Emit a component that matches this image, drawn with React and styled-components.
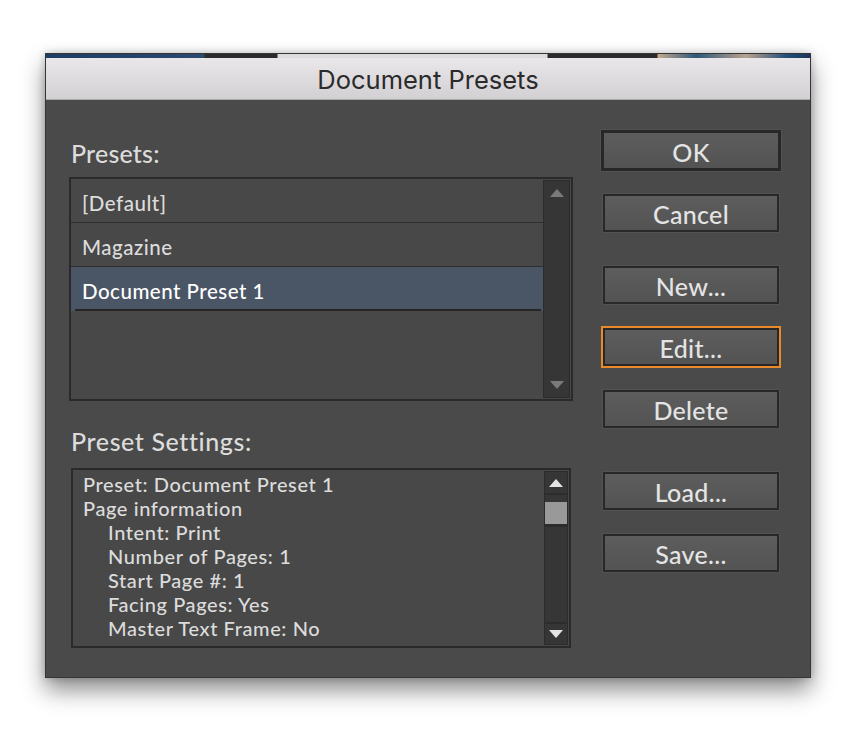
import React from "react";
import styled, { createGlobalStyle, css } from "styled-components";

const ui = `"Lato", "Open Sans", sans-serif`;
const sys = `"Inter", "Liberation Sans", sans-serif`;

const panel = "#4a4a4a";
const well = "#484848";
const edge = "#2a2a2a";
const ink = "#dcdcdc";

const GlobalStyle = createGlobalStyle`
  html, body {
    margin: 0;
    padding: 0;
    background: #ffffff;
  }
  body {
    font-family: ${ui};
    font-weight: 500;
    -webkit-font-smoothing: antialiased;
  }
`;

const Page = styled.div`
  width: 857px;
  height: 731px;
  box-sizing: border-box;
  padding: 53px 0 0 45px;
`;

const Window = styled.section`
  width: 766px;
  box-sizing: border-box;
  border: 1px solid #353535;
  background: ${panel};
  box-shadow: 0 12px 22px rgba(0, 0, 0, 0.45), 0 0 8px rgba(0, 0, 0, 0.2);
  display: flex;
  flex-direction: column;
`;

/* bits of the desktop that show above the title bar */
const Backdrop = styled.div`
  height: 4px;
  background: linear-gradient(
    90deg,
    #1e3d63 0,
    #2a4a70 158px,
    #2b2b2b 159px,
    #2b2b2b 231px,
    #dcdcdc 232px,
    #dcdcdc 501px,
    #2b2b2b 502px,
    #2b2b2b 611px,
    #c4a88e 612px,
    #2c5878 650px,
    #b9a290 700px,
    #24507a 740px,
    #1b3558 764px
  );
`;

const TitleBar = styled.header`
  height: 42px;
  box-sizing: border-box;
  border-bottom: 1px solid #a9a9a9;
  background: linear-gradient(#e9e7e9, #d2d0d2);
  display: flex;
  align-items: center;
  justify-content: center;
  padding-top: 2px;
  font-family: ${sys};
  font-weight: 400;
  font-size: 25.5px;
  color: #2b2b2b;
`;

const Body = styled.div`
  height: 577px;
  box-sizing: border-box;
  padding: 0 28px 0 23px;
  display: flex;
  gap: 28px;
`;

const LeftColumn = styled.div`
  width: 504px;
  padding-top: 38px;
  display: flex;
  flex-direction: column;
`;

const Label = styled.div`
  font-size: 25px;
  line-height: 30px;
  letter-spacing: ${(p) => p.$spacing || 0}px;
  color: ${ink};
  padding-left: 2px;
  margin-top: ${(p) => p.$top || 0}px;
`;

const Well = styled.div`
  display: flex;
  box-sizing: border-box;
  border: 2px solid ${edge};
  background: ${well};
  width: ${(p) => p.$width}px;
  height: ${(p) => p.$height}px;
  margin-top: ${(p) => p.$top}px;
  margin-left: ${(p) => p.$left || 0}px;
`;

const Rows = styled.ul`
  flex: 1;
  list-style: none;
  margin: 0;
  padding: 0;
`;

const Row = styled.li`
  height: 44px;
  box-sizing: border-box;
  padding: 12px 0 0 11px;
  font-size: 20.5px;
  line-height: 24px;
  letter-spacing: 0.5px;
  color: ${ink};
  border-bottom: 1px solid #2e2e2e;

  ${(p) =>
    p.$selected &&
    css`
      background: #4a5566;
      color: #ffffff;
      border-bottom: none;
      position: relative;
      &::after {
        content: "";
        position: absolute;
        left: 4px;
        right: 2px;
        bottom: 0;
        height: 2px;
        background: #262626;
      }
    `}
`;

const Details = styled.div`
  flex: 1;
  padding: 2px 0 0 10px;
  font-size: 20px;
  line-height: 24px;
  letter-spacing: 0.6px;
  color: ${ink};
`;

const Line = styled.div`
  padding-left: ${(p) => (p.$indent ? 25 : 0)}px;
  white-space: nowrap;
`;

const Scrollbar = styled.div`
  width: ${(p) => p.$width}px;
  box-sizing: border-box;
  margin: 1px 1px 1px 0;
  border: 1px solid #2c2c2c;
  background: #363636;
  display: flex;
  flex-direction: column;
  align-items: stretch;
`;

const Arrow = styled.div`
  height: ${(p) => p.$height}px;
  display: flex;
  align-items: center;
  justify-content: center;
  color: ${(p) => (p.$active ? "#e4e4e4" : "#7a7a7a")};
  ${(p) =>
    p.$boxed &&
    css`
      border-bottom: ${p.$down ? "none" : "2px solid #2c2c2c"};
      border-top: ${p.$down ? "2px solid #2c2c2c" : "none"};
    `}
`;

const Thumb = styled.div`
  height: 22px;
  margin-top: 7px;
  background: #999999;
  border-bottom: 3px solid #2c2c2c;
`;

const Track = styled.div`
  flex: 1;
`;

const ButtonColumn = styled.div`
  width: 180px;
  padding-top: 30px;
  display: flex;
  flex-direction: column;
  align-items: center;
`;

const Button = styled.button`
  width: ${(p) => (p.$default ? 180 : 176)}px;
  height: ${(p) => (p.$default ? 41 : 38)}px;
  margin-top: ${(p) => p.$top || 0}px;
  box-sizing: border-box;
  border: ${(p) => (p.$default ? 3 : 2)}px solid #282828;
  background: linear-gradient(#5d5d5d, #535353);
  box-shadow: 0 0 0 1px #525252;
  color: #e4e4e4;
  font-family: ${ui};
  font-weight: 500;
  font-size: 25px;
  letter-spacing: 0.3px;
  line-height: 1;
  padding: 3px 0 0;
  cursor: default;

  ${(p) =>
    p.$focused &&
    css`
      box-shadow: 0 0 0 2px #e8892b;
    `}
`;

const Triangle = ({ down }) => (
  <svg width="16" height="10" viewBox="0 0 16 10">
    <path d={down ? "M1 1 H15 L8 9 Z" : "M1 9 H15 L8 1 Z"} fill="currentColor" />
  </svg>
);

const settings = [
  ["Preset: Document Preset 1", false],
  ["Page information", false],
  ["Intent: Print", true],
  ["Number of Pages: 1", true],
  ["Start Page #: 1", true],
  ["Facing Pages: Yes", true],
  ["Master Text Frame: No", true],
];

const App = () => (
  <Page>
    <GlobalStyle />
    <Window>
      <Backdrop />
      <TitleBar>Document Presets</TitleBar>
      <Body>
        <LeftColumn>
          <Label $spacing={0.2}>Presets:</Label>
          <Well $width={504} $height={224} $top={9}>
            <Rows>
              <Row>[Default]</Row>
              <Row>Magazine</Row>
              <Row $selected>Document Preset 1</Row>
            </Rows>
            <Scrollbar $width={27}>
              <Arrow $height={24}>
                <Triangle />
              </Arrow>
              <Track />
              <Arrow $height={24}>
                <Triangle down />
              </Arrow>
            </Scrollbar>
          </Well>
          <Label $top={25} $spacing={0.6}>
            Preset Settings:
          </Label>
          <Well $width={500} $height={180} $top={12} $left={2}>
            <Details>
              {settings.map(([text, indent]) => (
                <Line key={text} $indent={indent}>
                  {text}
                </Line>
              ))}
            </Details>
            <Scrollbar $width={24}>
              <Arrow $height={21} $active $boxed>
                <Triangle />
              </Arrow>
              <Thumb />
              <Track />
              <Arrow $height={20} $active $boxed $down>
                <Triangle down />
              </Arrow>
            </Scrollbar>
          </Well>
        </LeftColumn>
        <ButtonColumn>
          <Button $default>OK</Button>
          <Button $top={23}>Cancel</Button>
          <Button $top={34}>New...</Button>
          <Button $top={24} $focused>
            Edit...
          </Button>
          <Button $top={24}>Delete</Button>
          <Button $top={44}>Load...</Button>
          <Button $top={24}>Save...</Button>
        </ButtonColumn>
      </Body>
    </Window>
  </Page>
);

export default App;
